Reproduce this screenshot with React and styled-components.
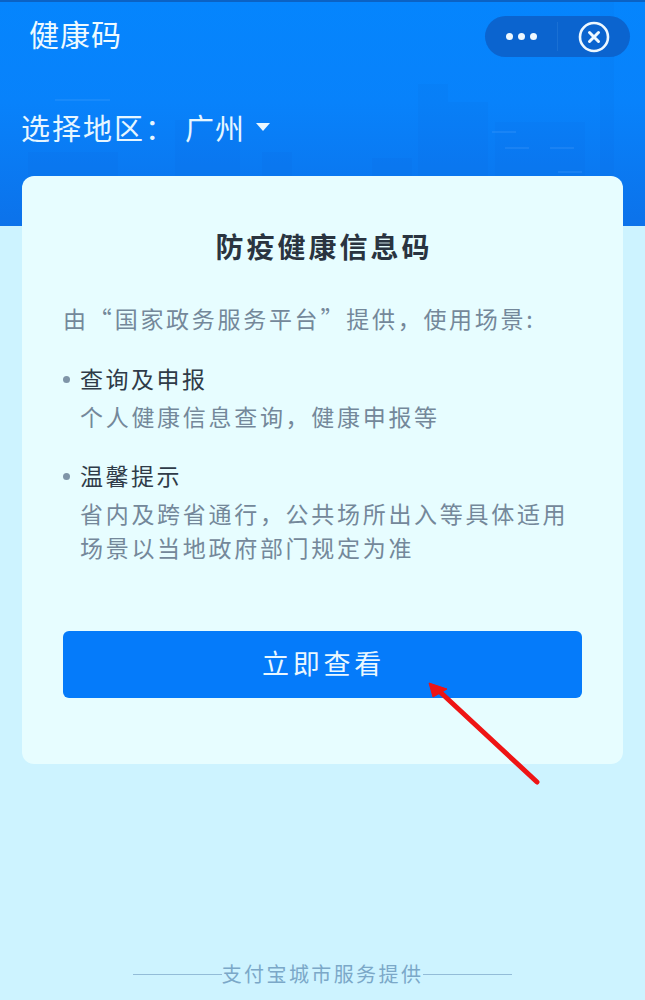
import React from 'react'
import styled, { createGlobalStyle } from 'styled-components'

const GlobalStyle = createGlobalStyle`
  html, body {
    margin: 0;
    padding: 0;
    background: #cdf3ff;
  }
  body {
    font-family: "Noto Sans CJK SC", "Liberation Sans", sans-serif;
  }
`

const Page = styled.div`
  position: relative;
  width: 645px;
  height: 1000px;
  overflow: hidden;
  background: #cdf3ff;
  display: flex;
  flex-direction: column;
`

const Header = styled.header`
  position: relative;
  height: 226px;
  box-sizing: border-box;
  flex-shrink: 0;
  border-top: 2px solid #0b62c4;
  background: linear-gradient(180deg, #0585fd 0%, #0882fb 45%, #0c72ea 100%);
`

const Skyline = styled.svg`
  position: absolute;
  left: 0;
  top: 0;
`

const TopBar = styled.div`
  position: relative;
  display: flex;
  align-items: flex-start;
  justify-content: space-between;
  padding: 14px 15px 0 29px;
`

const PageTitle = styled.div`
  margin-top: -3px;
  color: #eefaff;
  font-size: 30px;
  line-height: 40px;
  letter-spacing: 1px;
`

const Capsule = styled.div`
  display: flex;
  align-items: center;
  width: 145px;
  height: 41px;
  border-radius: 21px;
  background: #0b64cf;
`

const CapsulePart = styled.div`
  width: 72px;
  height: 100%;
  display: flex;
  align-items: center;
  justify-content: center;
  gap: 5px;
`

const Dot = styled.span`
  width: 7px;
  height: 7px;
  border-radius: 50%;
  background: #eef8ff;
`

const CapsuleDivider = styled.div`
  width: 1px;
  height: 29px;
  background: #1a70d4;
`

const RegionRow = styled.div`
  position: relative;
  display: flex;
  align-items: center;
  margin: 50px 0 0 21px;
  color: #e6f6ff;
  font-size: 29px;
  line-height: 40px;
`

const RegionLabel = styled.span`
  letter-spacing: 2px;
  width: 164px;
`

const RegionValue = styled.span`
  letter-spacing: 1px;
`

const Caret = styled.span`
  margin-left: 11px;
  width: 0;
  height: 0;
  border-left: 7px solid transparent;
  border-right: 7px solid transparent;
  border-top: 8px solid #eaf7ff;
`

const Card = styled.main`
  position: relative;
  box-sizing: border-box;
  width: 601px;
  height: 588px;
  margin: -50px 0 0 22px;
  padding: 48px 41px 0;
  border-radius: 12px;
  background: #e7fdff;
`

const CardTitle = styled.h1`
  margin: 0;
  padding-left: 3px;
  text-align: center;
  color: #2a3440;
  font-size: 28px;
  line-height: 44px;
  font-weight: 700;
  letter-spacing: 3px;
`

const Intro = styled.p`
  margin: 34px 0 0;
  color: #74889a;
  font-size: 23px;
  line-height: 32px;
  letter-spacing: 2.7px;
  white-space: nowrap;
`

const Quote = styled.span`
  display: inline-block;
  width: 26px;
  text-align: center;
`

const Section = styled.section`
  margin-top: ${(p) => p.$gap}px;
`

const SectionHead = styled.div`
  display: flex;
  align-items: center;
  color: #2f3b48;
  font-size: 23px;
  line-height: 32px;
  letter-spacing: 2.5px;
`

const Bullet = styled.span`
  width: 7px;
  height: 7px;
  margin: 2px 10px 0 0;
  border-radius: 50%;
  background: #7f95a8;
`

const SectionText = styled.p`
  margin: 5px 0 0 17px;
  color: #74889a;
  font-size: 23px;
  line-height: 34px;
  letter-spacing: 2.7px;
`

const ActionButton = styled.button`
  display: block;
  width: 519px;
  height: 67px;
  margin-top: 67px;
  padding: 0 0 4px 2px;
  border: none;
  border-radius: 6px;
  background: #057bfa;
  color: #eaf7ff;
  font-family: inherit;
  font-size: 27px;
  letter-spacing: 3.8px;
`

const Arrow = styled.svg`
  position: absolute;
  left: 0;
  top: 0;
  pointer-events: none;
`

const Footer = styled.footer`
  display: flex;
  align-items: center;
  justify-content: center;
  margin-top: 196px;
  color: #7ba8c8;
  font-size: 20px;
  line-height: 28px;
  letter-spacing: 2.4px;
`

const FooterLine = styled.span`
  width: 89px;
  height: 1px;
  background: #93bcd8;
`

const App = () => (
  <Page>
    <GlobalStyle />
    <Header>
      <Skyline width="645" height="224" viewBox="0 0 645 224">
        <g fill="#0a5fd0" opacity="0.07">
          <rect x="28" y="150" width="90" height="74" />
          <rect x="175" y="118" width="65" height="106" />
          <rect x="262" y="150" width="30" height="74" />
          <rect x="372" y="156" width="40" height="68" />
          <rect x="418" y="82" width="30" height="142" />
          <rect x="448" y="100" width="40" height="124" />
          <rect x="495" y="120" width="90" height="104" />
          <rect x="600" y="0" width="14" height="224" />
        </g>
        <g fill="#5aaaff" opacity="0.2">
          <rect x="55" y="97" width="55" height="2" />
          <rect x="492" y="129" width="24" height="2" />
          <rect x="505" y="145" width="24" height="2" />
          <rect x="550" y="145" width="24" height="2" />
          <rect x="558" y="169" width="24" height="2" />
        </g>
      </Skyline>
      <TopBar>
        <PageTitle>健康码</PageTitle>
        <Capsule>
          <CapsulePart>
            <Dot />
            <Dot />
            <Dot />
          </CapsulePart>
          <CapsuleDivider />
          <CapsulePart>
            <svg width="32" height="32" viewBox="0 0 32 32" fill="none" stroke="#eef8ff">
              <circle cx="16" cy="16" r="14" strokeWidth="2.6" />
              <path d="M11.5 11.5l9 9M20.5 11.5l-9 9" strokeWidth="3" strokeLinecap="round" />
            </svg>
          </CapsulePart>
        </Capsule>
      </TopBar>
      <RegionRow>
        <RegionLabel>选择地区：</RegionLabel>
        <RegionValue>广州</RegionValue>
        <Caret />
      </RegionRow>
    </Header>
    <Card>
      <CardTitle>防疫健康信息码</CardTitle>
      <Intro>由<Quote>“</Quote>国家政务服务平台<Quote>”</Quote>提供，使用场景:</Intro>
      <Section $gap={28}>
        <SectionHead>
          <Bullet />
          查询及申报
        </SectionHead>
        <SectionText>个人健康信息查询，健康申报等</SectionText>
      </Section>
      <Section $gap={26}>
        <SectionHead>
          <Bullet />
          温馨提示
        </SectionHead>
        <SectionText>省内及跨省通行，公共场所出入等具体适用场景以当地政府部门规定为准</SectionText>
      </Section>
      <ActionButton>立即查看</ActionButton>
    </Card>
    <Footer>
      <FooterLine />
      支付宝城市服务提供
      <FooterLine />
    </Footer>
    <Arrow width="645" height="1000" viewBox="0 0 645 1000">
      <path d="M537 782L438 690" stroke="#ee1414" strokeWidth="5" strokeLinecap="round" />
      <path d="M429 683L447 689L433 697Z" fill="#ee1414" stroke="#ee1414" strokeWidth="1" strokeLinejoin="round" />
    </Arrow>
  </Page>
)

export default App
